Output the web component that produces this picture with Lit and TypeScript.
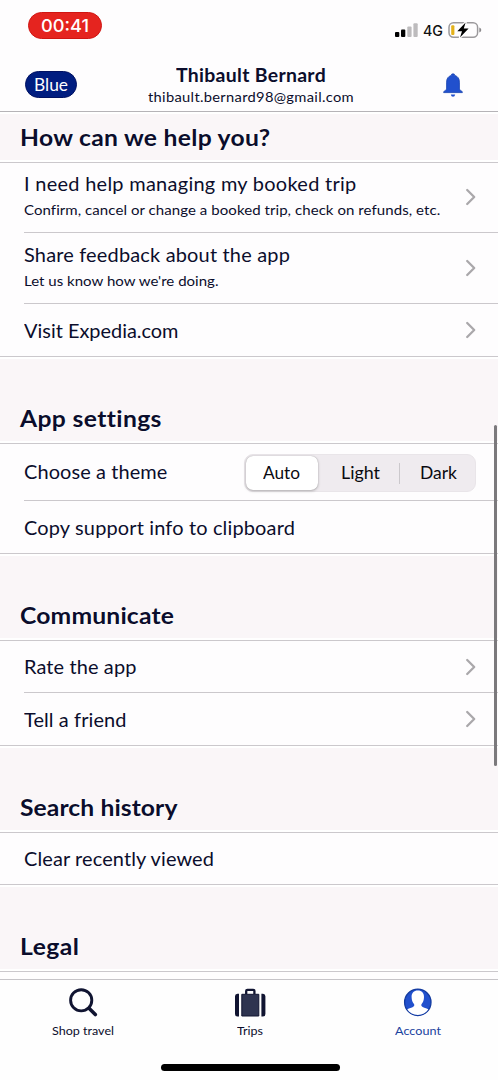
import { LitElement, html, css, svg, nothing } from "lit";
import { customElement, property, state } from "lit/decorators.js";

/** Single line of text widened and tracked so that it fills a given width. */
@customElement("tracked-text")
class TrackedText extends LitElement {
  static styles = css`
    :host { display: inline-block; white-space: nowrap; }
    .box { display: block; }
    .line { display: inline-block; transform-origin: 0 50%; }
  `;
  @property() text = "";
  @property({ type: Number }) fit = 0;
  @state() private tracking = 0;
  @state() private stretch = 1;

  firstUpdated() {
    const line = this.renderRoot.querySelector(".line") as HTMLElement;
    const natural = line.getBoundingClientRect().width;
    if (!this.fit || !natural) return;
    this.stretch = Math.min(1.05, this.fit / natural);
    this.tracking = (this.fit / this.stretch - natural) / this.text.length;
  }
  render() {
    return html`<span class="box" style="width:${this.fit}px"
      ><span class="line" style="letter-spacing:${this.tracking}px;transform:scaleX(${this.stretch})">${this.text}</span></span
    >`;
  }
}

interface Row {
  title: string;
  fit: number;
  sub?: string;
  subFit?: number;
  size: string;
  chevron?: boolean;
  theme?: boolean;
}
interface Section {
  title: string;
  fit: number;
  rows: Row[];
}

const SECTIONS: Section[] = [
  {
    title: "How can we help you?", fit: 250.5,
    rows: [
      { title: "I need help managing my booked trip", fit: 332.5, sub: "Confirm, cancel or change a booked trip, check on refunds, etc.", subFit: 416, size: "h70", chevron: true },
      { title: "Share feedback about the app", fit: 266, sub: "Let us know how we're doing.", subFit: 194.5, size: "h71", chevron: true },
      { title: "Visit Expedia.com", fit: 154.5, size: "h53", chevron: true },
    ],
  },
  {
    title: "App settings", fit: 141,
    rows: [
      { title: "Choose a theme", fit: 143.5, size: "h57", theme: true },
      { title: "Copy support info to clipboard", fit: 271, size: "h53" },
    ],
  },
  {
    title: "Communicate", fit: 154,
    rows: [
      { title: "Rate the app", fit: 112.5, size: "h52", chevron: true },
      { title: "Tell a friend", fit: 102.5, size: "h53", chevron: true },
    ],
  },
  { title: "Search history", fit: 157.5, rows: [{ title: "Clear recently viewed", fit: 190, size: "h52" }] },
  { title: "Legal", fit: 59.5, rows: [] },
];

@customElement("app-root")
class AppRoot extends LitElement {
  static styles = css`
    :host { display: block; }
    * { box-sizing: border-box; }
    .screen {
      width: 498px; height: 1080px; overflow: hidden; position: relative;
      display: flex; flex-direction: column; background: #fefdfe;
      font-family: Lato, "Open Sans", sans-serif; color: #0b0d2c;
    }
    svg { display: block; flex: none; }
    .status { height: 54px; flex: none; display: flex; justify-content: space-between; padding: 12px 16px 0 28px; }
    .clock {
      width: 74px; height: 27px; border-radius: 14px; background: #e5241f; border: 1px solid #d01512;
      color: #fff; font: 500 17.5px/25px Inter, sans-serif; text-align: center; padding-right: 2px;
    }
    .signals { display: flex; align-items: flex-start; padding-top: 9px; }
    .net { font: 500 14px/20px Inter, sans-serif; color: #111; margin: 0 5px 0 5px; }
    .head {
      height: 58px; flex: none; display: grid; grid-template-columns: 77px 1fr 77px;
      border-bottom: 1px solid #b5b3b7;
    }
    .tier {
      margin: 17px 0 0 25px; width: 52px; height: 27px; border-radius: 14px; background: #001d80;
      border: 1px solid #001162; color: #fff; font-size: 17px; line-height: 25px; text-align: center;
    }
    .who { display: flex; flex-direction: column; align-items: center; padding-top: 9px; padding-left: 3px; }
    .name { font-weight: 700; font-size: 18.5px; line-height: 24px; }
    .mail { font-size: 14px; line-height: 20px; }
    .bell { margin: 19px 0 0 21px; }
    .list { flex: 1; min-height: 0; overflow: hidden; }
    .title {
      height: 87px; margin: 0; padding: 0 0 6.5px 19.5px; display: flex; align-items: flex-end;
      background: #faf6f8; border-top: 2px solid #fff; border-bottom: 1px solid #cbc8cc;
      box-shadow: inset 0 -2px #fff;
      font-size: 23.5px; line-height: 38px; font-weight: 700;
      text-shadow: 0 0 2px #fff, 0 0 2px #fff;
    }
    .title.first { height: 51px; }
    .row { display: flex; align-items: center; padding-left: 24px; position: relative; border-bottom: 1px solid transparent; }
    .row::after { content: ""; position: absolute; left: 24px; right: 0; bottom: -1px; height: 1px; background: #cbc8cc; }
    .row.last::after { left: 0; }
    .h52 { height: 52px; } .h53 { height: 53px; } .h57 { height: 57px; }
    .h70 { height: 70px; } .h71 { height: 71px; }
    .text { flex: 1; display: flex; flex-direction: column; gap: 4px; padding-top: 1px; }
    .h57 .text { padding-top: 0; padding-bottom: 1px; }
    .h70 .text, .h71 .text { padding: 0 0 3px; }
    .t { font-size: 19px; line-height: 24px; }
    .s { font-size: 14.3px; line-height: 20px; }
    .chev { margin-right: 22px; }
    .h70 .chev { margin-top: -1px; }
    .seg {
      width: 232px; height: 38px; margin: 1px 22px 0 0; padding: 1px; border-radius: 9px; background: #efebef;
      display: grid; grid-template-columns: 72px 83px 1fr; align-items: center; text-align: center;
      font-size: 17px; line-height: 34px; color: #0a0a10; border: 1px solid #e9e5e9;
    }
    .on { background: #fff; border-radius: 7px; box-shadow: 0 1px 3px rgba(0,0,0,.25), 0 0 1px rgba(0,0,0,.3); height: 34px; padding-right: 1px; }
    .dark { position: relative; }
    .dark::before { content: ""; position: absolute; left: -2px; top: 7px; width: 1px; height: 21px; background: #cbc8cc; }
    .bar { position: absolute; right: 1px; top: 425px; width: 3px; height: 341px; border-radius: 2px; background: #7b797c; }
    .tabs { height: 101px; flex: none; border-top: 1px solid #c6c4c8; background: #fefefe; position: relative; display: grid; grid-template-columns: 166px 168px 167px; }
    .tab { display: flex; flex-direction: column; align-items: center; padding-top: 7px; font-size: 12px; line-height: 16px; gap: 6px; }
    .active { color: #1a429f; }
    .home { position: absolute; left: 161px; bottom: 9px; width: 179px; height: 7px; border-radius: 4px; background: #000; }
  `;

  private row(r: Row, last: boolean) {
    return html`<div class="row ${r.size} ${last ? "last" : ""}">
      <div class="text">
        <tracked-text class="t" .text=${r.title} .fit=${r.fit}></tracked-text>
        ${r.sub ? html`<tracked-text class="s" .text=${r.sub} .fit=${r.subFit ?? 0}></tracked-text>` : nothing}
      </div>
      ${r.theme
        ? html`<div class="seg">
            <div class="on"><tracked-text .text=${"Auto"} .fit=${37}></tracked-text></div>
            <div><tracked-text .text=${"Light"} .fit=${39}></tracked-text></div>
            <div class="dark"><tracked-text .text=${"Dark"} .fit=${37}></tracked-text></div>
          </div>`
        : nothing}
      ${r.chevron
        ? html`<svg class="chev" width="11" height="18" viewBox="0 0 11 18">
            <path d="M2.2 2 L9.2 9 L2.2 16" fill="none" stroke="#aaa8ab" stroke-width="2.3" stroke-linecap="round" stroke-linejoin="round" />
          </svg>`
        : nothing}
    </div>`;
  }

  private bars() {
    return [
      [0, 9, 5, "#000"], [6, 6.5, 7.5, "#000"], [12.3, 3.5, 10.5, "#bdbbbd"], [18.4, 0.3, 13.7, "#bdbbbd"],
    ].map(([x, y, h, c]) => svg`<rect x=${x} y=${y} width="4.3" height=${h} rx="1" fill=${c} />`);
  }

  render() {
    return html`<div class="screen">
      <div class="status">
        <div class="clock"><tracked-text .text=${"00:41"} .fit=${48}></tracked-text></div>
        <div class="signals">
          <svg width="23" height="17" viewBox="0 -2 23 17">${this.bars()}</svg>
          <span class="net"><tracked-text .text=${"4G"} .fit=${20}></tracked-text></span>
          <svg width="34" height="18" viewBox="0 0 34 18">
            <rect x="1" y="1.7" width="28.6" height="14.6" rx="4.5" fill="none" stroke="#9b999c" stroke-width="1.5" />
            <path d="M31.3 6.6 Q33.3 7.3 33.3 9 Q33.3 10.7 31.3 11.4Z" fill="#8b898c" />
            <rect x="3.2" y="4.3" width="3.2" height="9.6" rx="1" fill="#e3b11b" />
            <path d="M17.6 1.5 L9.3 10.2 H14 L12 16.5 L20.6 7.6 H15.8Z" fill="#000" stroke="#fff" stroke-width="2.4" paint-order="stroke" stroke-linejoin="round" />
          </svg>
        </div>
      </div>
      <div class="head">
        <div class="tier"><tracked-text .text=${"Blue"} .fit=${34}></tracked-text></div>
        <div class="who">
          <tracked-text class="name" .text=${"Thibault Bernard"} .fit=${150}></tracked-text>
          <tracked-text class="mail" .text=${"thibault.bernard98@gmail.com"} .fit=${206}></tracked-text>
        </div>
        <svg class="bell" width="22" height="25" viewBox="0 0 22 25">
          <path d="M11 .8 Q12.7 .8 12.8 2.4 Q17.4 3.8 17.4 9.2 V15.2 Q17.4 16.6 18.5 17.4 L20.3 18.7 V19.6 H1.7 V18.7 L3.5 17.4 Q4.6 16.6 4.6 15.2 V9.2 Q4.6 3.8 9.2 2.4 Q9.3 .8 11 .8Z" fill="#2150cd" stroke="#133fae" stroke-width=".8" />
          <path d="M8.8 21.6 H13.2 Q12.8 23.8 11 23.8 Q9.2 23.8 8.8 21.6Z" fill="#2150cd" />
        </svg>
      </div>
      <div class="list">
        ${SECTIONS.map((s, i) => html`
          <h2 class="title ${i === 0 ? "first" : ""}"><tracked-text .text=${s.title} .fit=${s.fit}></tracked-text></h2>
          ${s.rows.map((r, j) => this.row(r, j === s.rows.length - 1))}`)}
      </div>
      <div class="tabs">
        <div class="tab">
          <svg width="32" height="30" viewBox="67 987 32 30">
            <circle cx="81.2" cy="1000.3" r="10.6" fill="none" stroke="#101431" stroke-width="2.9" />
            <path d="M89 1008.3 L95.3 1014.6" stroke="#101431" stroke-width="3.6" stroke-linecap="round" />
          </svg>
          <tracked-text .text=${"Shop travel"} .fit=${62}></tracked-text>
        </div>
        <div class="tab">
          <svg width="32" height="30" viewBox="234 987 32 30">
            <path d="M246.2 994 V991 Q246.2 989.8 247.4 989.8 H253.2 Q254.4 989.8 254.4 991 V994" fill="none" stroke="#101431" stroke-width="2.3" />
            <path d="M241.8 994.3 H258.8 V1016 H241.8Z" fill="#2e3450" stroke="#101431" stroke-width="1" />
            <path d="M239 993.8 V1016.5 H237.4 Q235 1016.5 235 1014 V996.3 Q235 993.8 237.4 993.8Z M261.4 993.8 V1016.5 H263 Q265.4 1016.5 265.4 1014 V996.3 Q265.4 993.8 263 993.8Z" fill="#101431" />
          </svg>
          <tracked-text .text=${"Trips"} .fit=${26}></tracked-text>
        </div>
        <div class="tab active">
          <svg width="32" height="30" viewBox="402 987 32 30">
            <circle cx="417.8" cy="1002.3" r="13.2" fill="#2150cd" stroke="#133b9f" stroke-width="1.3" />
            <path d="M417.8 990.6 C421.8 990.6 424 993.2 424 997 C424 1000.5 422.9 1002.2 421.6 1004 C421 1005.2 421.3 1006.3 422.6 1006.9 C425 1007.9 427.2 1008.2 428.3 1009.6 C426 1013 422.3 1015 417.8 1015 C413.3 1015 409.6 1013 407.3 1009.6 C408.4 1008.2 410.6 1007.9 413 1006.9 C414.3 1006.3 414.6 1005.2 414 1004 C412.7 1002.2 411.6 1000.5 411.6 997 C411.6 993.2 413.8 990.6 417.8 990.6Z" fill="#fff" />
          </svg>
          <tracked-text .text=${"Account"} .fit=${46}></tracked-text>
        </div>
        <div class="home"></div>
      </div>
      <div class="bar"></div>
    </div>`;
  }
}
